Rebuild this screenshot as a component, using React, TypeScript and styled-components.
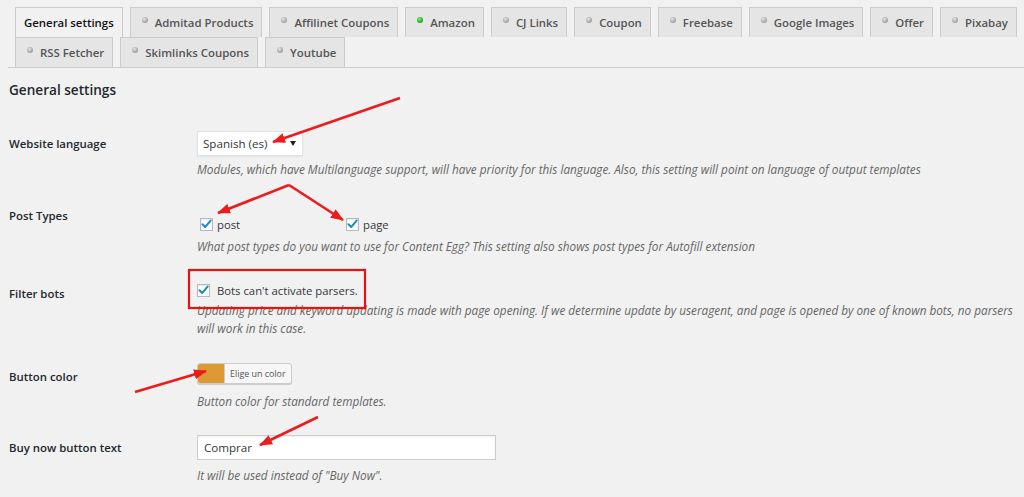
import React from "react";
import styled, { createGlobalStyle } from "styled-components";

const Global = createGlobalStyle`
  html, body { margin: 0; padding: 0; background: #f1f1f1; }
  body { font-family: "Open Sans", "Noto Sans", sans-serif; color: #23282d; }
  * { box-sizing: border-box; }
`;

const Page = styled.div`
  position: relative;
  width: 1024px;
  height: 497px;
  overflow: hidden;
  background: #f1f1f1;
`;

const Nav = styled.nav`
  margin-left: 8px;
  padding-top: 7px;
  border-bottom: 1px solid #ccc;
  display: flex;
  flex-direction: column;
`;

const TabRow = styled.div`
  display: flex;
  gap: 7px;
  padding-left: 7px;
`;

const Tab = styled.a<{ $active?: boolean }>`
  display: flex;
  align-items: center;
  height: 30px;
  padding: 0 8px;
  border: 1px solid #ccc;
  border-bottom: none;
  background: ${(p) => (p.$active ? "#f1f1f1" : "#e5e5e5")};
  color: ${(p) => (p.$active ? "#111" : "#555")};
  font-size: 11.4px;
  font-weight: 600;
  white-space: nowrap;
  text-decoration: none;
`;

const Dot = styled.span<{ $on?: boolean }>`
  width: 6px;
  height: 6px;
  border-radius: 50%;
  margin: 0 7px 6px 3px;
  background: ${(p) =>
    p.$on
      ? "radial-gradient(circle at 40% 35%, #8be88b, #17b517 60%, #0f900f)"
      : "radial-gradient(circle at 40% 35%, #e6e6e6, #a6a6a6 60%, #8c8c8c)"};
`;

const Content = styled.div`
  padding-left: 9px;
`;

const Title = styled.h2`
  margin: 13px 0 0;
  font-size: 13.6px;
  line-height: 18px;
  font-weight: 600;
  color: #23282d;
`;

const Row = styled.div<{ $gap: number }>`
  display: grid;
  grid-template-columns: 188px 1fr;
  align-items: start;
  margin-top: ${(p) => p.$gap}px;
`;

const Label = styled.div<{ $offset: number }>`
  padding-top: ${(p) => p.$offset}px;
  font-size: 11.4px;
  line-height: 16px;
  font-weight: 600;
  color: #23282d;
`;

const Field = styled.div<{ $offset?: number }>`
  padding-top: ${(p) => p.$offset ?? 0}px;
  display: flex;
  flex-direction: column;
  align-items: flex-start;
`;

const Desc = styled.p<{ $gap: number }>`
  margin: ${(p) => p.$gap}px 0 0;
  font-size: 11.75px;
  line-height: 18px;
  font-style: italic;
  color: #666;
  white-space: nowrap;
`;

const Select = styled.div`
  width: 106px;
  height: 25px;
  background: #fff;
  border: 1px solid #e2e2e2;
  box-shadow: 0 1px 2px rgba(0, 0, 0, 0.05);
  display: flex;
  align-items: center;
  justify-content: space-between;
  padding: 0 6px 0 5px;
  font-size: 11.6px;
  color: #32373c;
`;

const Caret = styled.span`
  width: 0;
  height: 0;
  border-left: 3px solid transparent;
  border-right: 3px solid transparent;
  border-top: 5px solid #222;
`;

const Checks = styled.div`
  display: flex;
  height: 16px;
  align-items: center;
`;

const CheckItem = styled.label<{ $width?: number; $inset?: number; $space?: number }>`
  display: flex;
  align-items: center;
  gap: ${(p) => p.$space ?? 4}px;
  width: ${(p) => (p.$width ? `${p.$width}px` : "auto")};
  padding-left: ${(p) => p.$inset ?? 0}px;
  font-size: 11.3px;
  color: #32373c;
`;

const Box = styled.span`
  width: 13px;
  height: 13px;
  background: #fff;
  border: 1px solid #b4b9be;
  box-shadow: inset 0 1px 2px rgba(0, 0, 0, 0.1);
  display: flex;
  align-items: center;
  justify-content: center;
  flex: none;
`;

const ColorButton = styled.div`
  display: flex;
  height: 21px;
  border: 1px solid #ccc;
  border-radius: 3px;
  background: #f7f7f7;
  box-shadow: 0 1px 0 #ccc;
  overflow: hidden;
`;

const Swatch = styled.span<{ $color: string }>`
  width: 26px;
  background: ${(p) => p.$color};
`;

const ColorText = styled.span`
  display: flex;
  align-items: center;
  padding: 0 5px 0 5px;
  border-left: 1px solid #ccc;
  font-size: 8.9px;
  color: #555;
`;

const TextInput = styled.div`
  width: 299px;
  height: 25px;
  background: #fff;
  border: 1px solid #ccc;
  box-shadow: inset 0 1px 2px rgba(0, 0, 0, 0.07);
  display: flex;
  align-items: center;
  padding-left: 6px;
  font-size: 11.6px;
  color: #32373c;
`;

const Overlay = styled.svg`
  position: absolute;
  top: 0;
  left: 0;
  pointer-events: none;
`;

const Check = () => (
  <svg width="11" height="10" viewBox="0 0 11 10">
    <path d="M1.5 5.2 L4.2 8 L9.6 1.6" fill="none" stroke="#1e8cbe" strokeWidth="2" strokeLinecap="round" strokeLinejoin="round" />
  </svg>
);

const row1 = [
  { name: "General settings", active: true },
  { name: "Admitad Products" },
  { name: "Affilinet Coupons" },
  { name: "Amazon", on: true },
  { name: "CJ Links" },
  { name: "Coupon" },
  { name: "Freebase" },
  { name: "Google Images" },
  { name: "Offer" },
  { name: "Pixabay" },
];
const row2 = [{ name: "RSS Fetcher" }, { name: "Skimlinks Coupons" }, { name: "Youtube" }];

type T = { name: string; active?: boolean; on?: boolean };

const renderTab = (t: T) => (
  <Tab key={t.name} $active={t.active}>
    {!t.active && <Dot $on={t.on} />}
    {t.name}
  </Tab>
);

const arrows: [number, number, number, number][] = [
  [400, 98, 273, 142],
  [289, 185, 218, 213],
  [289, 185, 343, 220],
  [135, 392, 206, 371],
  [318, 417, 260, 445],
];

export default function App() {
  return (
    <Page>
      <Global />
      <Nav>
        <TabRow>{row1.map(renderTab)}</TabRow>
        <TabRow>{row2.map(renderTab)}</TabRow>
      </Nav>
      <Content>
        <Title>General settings</Title>

        <Row $gap={32}>
          <Label $offset={5}>Website language</Label>
          <Field>
            <Select>
              <span>Spanish (es)</span>
              <Caret />
            </Select>
            <Desc $gap={4}>
              Modules, which have Multilanguage support, will have priority for this language. Also, this setting will point on language of output templates
            </Desc>
          </Field>
        </Row>

        <Row $gap={30}>
          <Label $offset={0}>Post Types</Label>
          <Field $offset={8}>
            <Checks>
              <CheckItem $width={149} $inset={3}>
                <Box><Check /></Box>post
              </CheckItem>
              <CheckItem>
                <Box><Check /></Box>page
              </CheckItem>
            </Checks>
            <Desc $gap={5}>
              What post types do you want to use for Content Egg? This setting also shows post types for Autofill extension
            </Desc>
          </Field>
        </Row>

        <Row $gap={27}>
          <Label $offset={4}>Filter bots</Label>
          <Field>
            <Checks>
              <CheckItem $space={7}>
                <Box><Check /></Box>Bots can't activate parsers.
              </CheckItem>
            </Checks>
            <Desc $gap={3}>
              Updating price and keyword updating is made with page opening. If we determine update by useragent, and page is opened by one of known bots, no parsers
              <br />
              will work in this case.
            </Desc>
          </Field>
        </Row>

        <Row $gap={26}>
          <Label $offset={6}>Button color</Label>
          <Field>
            <ColorButton>
              <Swatch $color="#dd9933" />
              <ColorText>Elige un color</ColorText>
            </ColorButton>
            <Desc $gap={8}>Button color for standard templates.</Desc>
          </Field>
        </Row>

        <Row $gap={25}>
          <Label $offset={5}>Buy now button text</Label>
          <Field>
            <TextInput>Comprar</TextInput>
            <Desc $gap={6}>It will be used instead of "Buy Now".</Desc>
          </Field>
        </Row>
      </Content>

      <Overlay width="1024" height="497" viewBox="0 0 1024 497">
        <defs>
          <marker id="head" markerUnits="userSpaceOnUse" markerWidth="13" markerHeight="10" refX="12" refY="5" orient="auto">
            <path d="M0 0 L13 5 L0 10 Z" fill="#ec1c1c" />
          </marker>
        </defs>
        {arrows.map(([x1, y1, x2, y2], i) => (
          <line key={i} x1={x1} y1={y1} x2={x2} y2={y2} stroke="#ec1c1c" strokeWidth="2.6" markerEnd="url(#head)" />
        ))}
        <rect x="189" y="270" width="176" height="38" fill="none" stroke="#ec1010" strokeWidth="2.2" />
      </Overlay>
    </Page>
  );
}
